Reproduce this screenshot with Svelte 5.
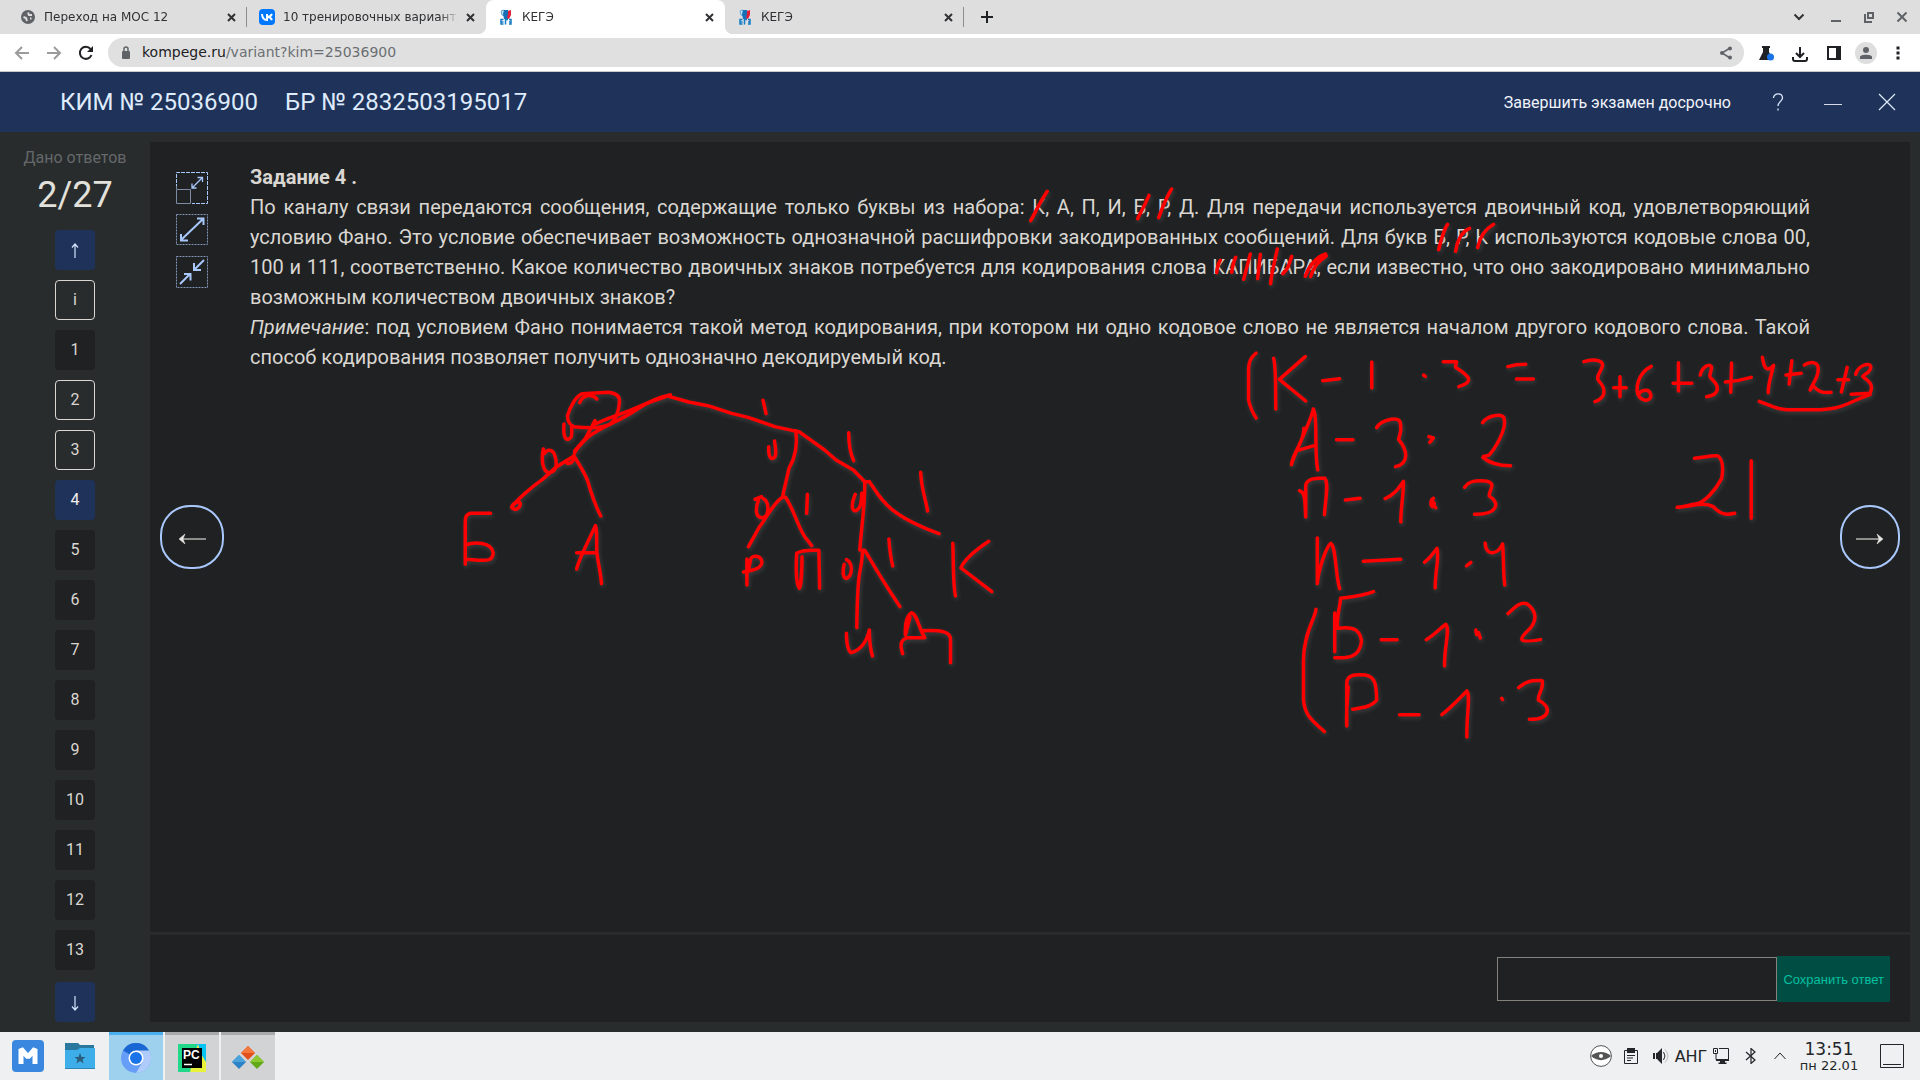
<script>
  const tabs = [
    { title: 'Переход на МОС 12', icon: 'globe' },
    { title: '10 тренировочных вариантов', icon: 'vk' },
    { title: 'КЕГЭ', icon: 'ege', active: true },
    { title: 'КЕГЭ', icon: 'ege' },
  ];
  const tasks = [
    { id: 'i', done: true },
    { id: '1' },
    { id: '2', done: true },
    { id: '3', done: true },
    { id: '4', current: true },
    ...Array.from({ length: 9 }, (_, n) => ({ id: String(n + 5) })),
  ];

  const tree = [
    'M602 75 C565 82 535 102 512 120 C475 150 420 172 388 200 C370 220 356 235 351 250',
    'M602 75 L545 98 L495 122 L440 145 L405 162 M405 152 L380 205 L352 243',
    'M333 138 C340 110 355 78 372 71 L440 67 C462 70 470 80 469 95 C468 120 460 150 445 162 C425 175 390 175 350 170 C338 165 333 150 333 138',
    'M365 98 C372 76 395 68 410 87',
    'M324 162 C322 190 325 210 335 208 C347 204 344 190 344 170',
    'M270 237 C264 270 268 305 285 308 C305 308 308 280 298 250 C290 235 278 240 273 250',
    'M350 258 L305 290 L268 328 C240 350 200 390 187 412 C195 425 210 415 210 400 C205 390 190 400 187 412',
    'M332 280 C345 283 350 270 350 258 C365 285 378 310 385 330 C395 370 405 405 420 438',
    'M132 430 H80 C66 434 66 445 66 460 V583 M66 525 C90 515 135 515 139 548 C138 577 120 572 70 568',
    'M357 597 C365 560 390 510 406 467 C412 480 408 520 410 550 C415 590 420 610 422 641 M357 548 H408',
    'M600 80 L650 96 L700 107 L762 130 L805 142 L875 170 L935 185',
    'M844 91 L852 131 M859 230 C858 255 862 267 870 265 C880 262 878 240 874 213',
    'M930 182 C935 230 925 270 912 295 L896 375 M938 185 L1005 240 L1035 270 L1080 300 L1110 335 H1122',
    'M1068 188 C1068 230 1072 250 1081 272',
    'M823 388 L840 380 M832 390 C820 430 830 445 845 443 C862 435 860 395 845 386',
    'M893 383 C870 400 850 450 835 470 L806 530 M896 382 H903 C930 430 940 490 960 510 L971 527 M960 373 L958 430',
    'M802 567 V645 M793 606 C820 600 842 595 841 575 C838 555 815 555 812 567 L806 600',
    'M946 560 C946 610 942 650 939 655 C930 640 930 590 932 550 C945 540 970 540 990 541 L992 655',
    'M1110 335 C1110 420 1100 480 1097 540 M1085 373 C1070 415 1080 425 1088 422 C1100 415 1102 390 1102 370',
    'M1122 335 C1150 380 1160 430 1304 491 M1256 307 C1258 360 1270 390 1274 423',
    'M1340 520 C1342 580 1340 640 1347 678 M1434 514 C1400 540 1370 570 1361 594 L1442 665',
    'M1104 541 C1104 580 1096 600 1094 630 C1090 680 1090 720 1089 773 M1104 541 H1110 C1135 590 1160 640 1202 710',
    'M1173 507 C1175 545 1178 565 1183 588 M1056 583 C1050 610 1055 628 1063 625 C1078 615 1080 580 1062 569',
    'M1062 790 C1062 830 1070 848 1075 848 C1100 840 1115 815 1122 780 C1122 820 1125 840 1130 858',
    'M1228 742 L1216 795 C1215 760 1222 735 1232 728 C1248 735 1250 775 1267 803 H1222 C1200 810 1203 830 1209 851 M1262 782 C1310 780 1335 785 1334 810 V878',
  ];
  const sums = [
    'M81 39 C62 60 64 80 64 110 V180 C68 205 74 220 81 234',
    'M120 55 C126 80 124 150 125 207 M191 50 L133 118 L192 183 M230 122 L268 116 M340 66 V144',
    'M456 105 L460 109 M500 65 H530 C528 80 525 80 530 84 C560 110 570 125 535 140',
    'M645 80 C660 74 670 73 685 73 M664 117 H702',
    'M815 65 C835 55 857 60 857 75 C857 90 840 110 848 122 C868 150 862 175 840 185',
    'M896 110 V170 M882 143 H910 M966 79 C935 100 928 150 940 172 C955 190 970 175 964 160 C960 145 940 150 938 165',
    'M1027 68 V153 M1015 130 H1057 M1076 105 C1080 80 1095 70 1101 80 C1103 95 1092 105 1100 115 C1122 140 1118 165 1090 170',
    'M1146 69 L1144 157 M1132 126 C1155 124 1170 120 1190 112',
    'M1215 52 C1218 80 1224 100 1240 76 C1236 100 1228 130 1228 158 M1281 62 L1275 132 M1268 105 L1302 100',
    'M1309 75 C1325 62 1342 66 1340 90 C1340 115 1325 135 1322 150 L1328 137 C1340 155 1350 160 1369 157',
    'M1405 82 L1392 156 M1384 119 H1408 M1424 103 C1430 75 1455 66 1458 80 C1458 100 1440 102 1440 110 C1455 125 1465 135 1456 160 L1414 163',
    'M1208 184 C1240 200 1245 208 1270 209 H1345 C1400 205 1400 190 1456 164',
    'M188 265 C188 310 165 330 160 374 C170 330 205 240 209 207 C220 230 210 330 219 390 M172 332 L213 316 M261 299 H298',
    'M351 263 C360 240 403 225 404 250 C408 275 402 285 400 298 C420 330 425 370 393 380',
    'M468 290 L478 294 L470 307',
    'M588 248 C600 225 630 220 636 233 C645 270 610 335 603 345 C595 350 590 345 589 352 C600 365 620 377 651 377',
    'M178 452 C192 455 190 490 192 531 V440 C192 415 215 413 235 415 C244 430 236 480 234 524 M281 480 L314 475',
    'M370 476 C390 465 400 445 411 424 C411 470 405 500 405 546 M478 475 C470 482 472 498 476 500 C482 494 482 490 474 482 M474 490 L483 503',
    'M548 442 C560 420 575 422 595 423 C622 430 602 450 603 468 C630 490 620 525 570 523',
    'M218 594 V731 C220 690 238 620 248 610 C260 620 258 700 268 746 M321 664 L405 658',
    'M458 667 C475 650 480 635 486 625 C492 650 482 690 482 744 M562 667 L552 678',
    'M594 609 C596 655 625 640 633 612 C636 660 634 700 638 735',
    'M257 819 V935 M263 860 C262 820 270 795 270 775 C300 770 320 768 344 755 M263 865 C300 858 315 870 317 905 C312 950 290 956 257 953',
    'M215 808 C215 830 187 880 187 960 V1080 C190 1130 210 1145 234 1175',
    'M361 899 H397 M462 899 C485 880 498 858 506 853 C516 870 502 920 503 978 M573 870 L575 884 L579 878 L583 894',
    'M645 821 C665 795 675 785 688 792 C710 815 710 840 695 865 C668 900 665 910 718 899',
    'M287 1040 C286 1080 282 1120 284 1158 V1030 C284 1003 305 1003 325 1005 C350 1010 350 1040 351 1080 C340 1100 320 1103 297 1108',
    'M402 1124 H446 M497 1124 C520 1100 540 1070 553 1053 C562 1070 552 1120 553 1191 M631 1075 L633 1079',
    'M669 1043 C690 1020 700 1022 722 1022 C725 1050 712 1060 713 1080 C745 1100 740 1140 693 1138',
    'M1063 355 C1085 352 1105 345 1116 348 C1127 360 1127 390 1124 415 C1110 450 1085 490 1065 492 C1050 494 1045 500 1024 502 C1060 498 1085 485 1105 500 C1120 520 1130 527 1153 520 M1190 362 V535',
  ];
  const strikes = [
    'M152 152 C165 130 180 95 202 64 M473 146 C485 120 495 105 507 76 M536 143 C548 110 560 80 575 57',
    'M1376 239 C1385 205 1390 180 1403 163 M1427 244 C1430 215 1445 185 1469 175 M1493 233 C1500 200 1520 175 1541 163',
    'M710 308 C712 290 715 280 721 271 M755 307 C758 290 760 275 767 262 M791 328 L811 252 M833 326 L841 253 M872 341 C874 310 885 270 892 237',
    'M908 311 C925 300 928 280 935 259 M976 319 C985 290 1010 260 1037 252 M992 320 C1000 290 1020 270 1039 258',
  ];
</script>

<div class="desktop">
  <div class="tabstrip">
    {#each tabs as tab}
      <div class="tab" class:active={tab.active}>
        <svg class="fav" viewBox="0 0 16 16" aria-hidden="true">
          {#if tab.icon === 'globe'}
            <circle cx="8" cy="8" r="7" fill="#5f6368" />
            <path d="M3.500 8l2.500 1 1 3M8 3.500l1 2.500h3M10 9.500h1.500" fill="none" stroke="#dedede" stroke-width="2" />
          {:else if tab.icon === 'vk'}
            <rect width="16" height="16" rx="4" fill="#07f" />
            <path d="M3 5c.2 3.600 2 6 5 6V5m5 0C12 7 10.500 8 8.500 8c2.500 0 3.800 1.500 4.500 3" fill="none" stroke="#fff" stroke-width="2" />
          {:else}
            <path d="M3 2l3-1 1 2v4l-3-1z" fill="#c5e3f5" stroke="#5aa5d5" />
            <path d="M6 1h4l1 3-1 6H6L5 5z" fill="#1670b8" />
            <path d="M10 2l3-1v5l-2 4-2-1 1-4z" fill="#e2203a" />
            <path d="M5.500 10.500H3v4.500h2.500M3 13h2.500M7.500 15.500v-5h2.500M11 10.500h2v4.500h-2M13 13h-2" fill="none" stroke="#147cc4" stroke-width="1.500" />
          {/if}
        </svg>
        <span class="title">{tab.title}</span>
        <button class="bare" aria-label="Закрыть вкладку">
          <svg width="9" height="9" viewBox="0 0 9 9"><path d="M1 1l7 7M8 1l-7 7" stroke="#303134" stroke-width="2" /></svg>
        </button>
      </div>
    {/each}
    <button class="bare plus" aria-label="Новая вкладка">
      <svg width="12" height="12" viewBox="0 0 12 12"><path d="M6 0v12M0 6h12" stroke="#202124" stroke-width="2" /></svg>
    </button>
    <div class="winctl">
      <button class="bare search" aria-label="Поиск вкладок"><svg width="12" height="12" viewBox="0 0 12 12"><path d="M1.500 3.500L6 8l4.500-4.500" fill="none" stroke="#303134" stroke-width="2" /></svg></button>
      <button class="bare" aria-label="Свернуть"><svg width="12" height="12" viewBox="0 0 12 12"><path d="M1 10h10" stroke="#5f6368" stroke-width="2" /></svg></button>
      <button class="bare" aria-label="Восстановить"><svg width="12" height="12" viewBox="0 0 12 12"><path d="M5 2h5v5H5zM2 3v8h7" fill="none" stroke="#5f6368" stroke-width="2" /></svg></button>
      <button class="bare" aria-label="Закрыть"><svg width="12" height="12" viewBox="0 0 12 12"><path d="M1.500 1.500l9 9M10.500 1.500l-9 9" stroke="#5f6368" stroke-width="2" /></svg></button>
    </div>
  </div>

  <div class="toolbar">
    <div class="history">
      <button class="bare" aria-label="Назад"><svg width="16" height="16" viewBox="0 0 16 16"><path d="M15 8H2M8 2L2 8l6 6" fill="none" stroke="#9b9b9b" stroke-width="2" /></svg></button>
      <button class="bare" aria-label="Вперёд"><svg width="16" height="16" viewBox="0 0 16 16"><path d="M1 8h13M8 2l6 6-6 6" fill="none" stroke="#9b9b9b" stroke-width="2" /></svg></button>
      <button class="bare" aria-label="Обновить"><svg width="16" height="16" viewBox="0 0 16 16"><path d="M13.500 10A6 6 0 1 1 12.500 4" fill="none" stroke="#202124" stroke-width="2" /><path d="M15 1v6H9z" fill="#202124" /></svg></button>
    </div>
    <div class="omnibox">
      <svg width="10" height="14" viewBox="0 0 10 14" aria-hidden="true"><rect x="1" y="5" width="8" height="8" rx="1" fill="#5f6368" /><path d="M3 5V3a2 2 0 0 1 4 0v2" fill="none" stroke="#5f6368" stroke-width="1.500" /></svg>
      <span class="url"><b>kompege.ru</b>/variant?kim=25036900</span>
      <svg width="14" height="14" viewBox="0 0 14 14" aria-hidden="true"><path d="M11 2L3 7l8 5" fill="none" stroke="#5f6368" stroke-width="1.500" /><circle cx="11" cy="2.500" r="2" fill="#5f6368" /><circle cx="3" cy="7" r="2" fill="#5f6368" /><circle cx="11" cy="11.500" r="2" fill="#5f6368" /></svg>
    </div>
    <div class="exts">
      <button class="bare" aria-label="Эксперименты"><svg width="16" height="16" viewBox="0 0 16 16"><path d="M4 1h8v2h-1v4l4 8H1l4-8V3H4z" fill="#202124" /><circle cx="12.500" cy="12" r="3.500" fill="#1a73e8" /></svg></button>
      <button class="bare" aria-label="Загрузки"><svg width="16" height="18" viewBox="0 0 16 18"><path d="M8 3v9M4 9l4 4 4-4M1 13v2q0 2 2 2h10q2 0 2-2v-2" fill="none" stroke="#202124" stroke-width="2" /></svg></button>
      <button class="bare" aria-label="Боковая панель"><svg width="16" height="16" viewBox="0 0 16 16"><path d="M2 2h12v12H2z" fill="none" stroke="#202124" stroke-width="2" /><path d="M10 2h4v12h-4z" fill="#202124" /></svg></button>
      <button class="bare" aria-label="Профиль"><svg width="22" height="22" viewBox="0 0 22 22"><circle cx="11" cy="11" r="11" fill="#dedede" /><circle cx="11" cy="8" r="3" fill="#5f6368" /><path d="M5 17v-2c0-3 12-3 12 0v2z" fill="#5f6368" /></svg></button>
      <button class="bare" aria-label="Меню"><svg width="4" height="14" viewBox="0 0 4 14"><path d="M.5.500h3v3h-3zM.5 5.500h3v3h-3zM.5 10.500h3v3h-3z" fill="#202124" /></svg></button>
    </div>
  </div>

  <header>
    <span>КИМ № 25036900</span>
    <span class="form">БР № 2832503195017</span>
    <button class="bare finish">Завершить экзамен досрочно</button>
    <button class="bare help" aria-label="Справка"><svg width="12" height="18" viewBox="0 0 12 18"><path d="M1.500 5C1.500-.5 10.500-.5 10.500 5c0 3-4.500 4-4.500 8M6 15.500v2" fill="none" stroke="#dce9fb" stroke-width="1.300" /></svg></button>
    <button class="bare" aria-label="Свернуть экзамен"><svg width="18" height="18" viewBox="0 0 18 18"><path d="M0 11.500h18" stroke="#d5dce5" /></svg></button>
    <button class="bare" aria-label="Закрыть экзамен"><svg width="18" height="18" viewBox="0 0 18 18"><path d="M1 1l16 16M17 1L1 17" stroke="#dce9fb" stroke-width="1.200" /></svg></button>
  </header>

  <div class="page">
    <nav>
      <p class="given">Дано ответов</p>
      <p class="count">2/27</p>
      <div class="list">
        <button class="num current arrow" aria-label="Вверх"><svg width="8" height="16" viewBox="0 0 8 16"><path d="M4 15V1M1 4.500L4 1l3 3.500" fill="none" stroke="#d3e3fd" stroke-width="1.200" /></svg></button>
        {#each tasks as t}
          <button class="num" class:done={t.done} class:current={t.current}>{t.id}</button>
        {/each}
      </div>
      <button class="num current arrow down" aria-label="Вниз"><svg width="8" height="16" viewBox="0 0 8 16"><path d="M4 1v14M1 11.500L4 15l3-3.500" fill="none" stroke="#d3e3fd" stroke-width="1.200" /></svg></button>
    </nav>

    <main>
      <section class="question">
        <div class="rail">
          <div class="sizes">
            <button class="bare" aria-label="Обычный размер"><svg width="32" height="32" viewBox="0 0 32 32" fill="none" stroke="#a8c7fa"><path d="M.5 16V.5h31v31H16" stroke-dasharray="4 1" /><path d="M.5 17.500h14v14H.5zM.5 17v-3" stroke="#7d8aa3" /><path d="M16 16L26 6M16 11.500V16h4.500M21.500 5.500H26.500V10" stroke-width="1.300" /></svg></button>
            <button class="bare" aria-label="Увеличить"><svg width="32" height="32" viewBox="0 0 32 32" fill="none" stroke="#a8c7fa"><path d="M.5.500h31v30H.5z" stroke-dasharray="2 1" stroke="#8397b8" /><path d="M5 26L27 5M5 20v6.500h7M21 4.500h6.500V11" stroke-width="2" /></svg></button>
            <button class="bare" aria-label="Уменьшить"><svg width="32" height="32" viewBox="0 0 32 32" fill="none" stroke="#a8c7fa"><path d="M.5.500h31v31H.5z" stroke-dasharray="2 1" stroke="#8397b8" /><path d="M28 4L18 14M18 7v7h7M4 28l10-10M8 18h6.500v6.500" stroke-width="2" /></svg></button>
          </div>
          <button class="round" aria-label="Предыдущее задание"><svg width="28" height="12" viewBox="0 0 28 12"><path d="M2 6h26" stroke="#d8d4cf" stroke-width="1.200" /><path d="M7 1L1 6l6 5-2-5z" fill="#e8e6e3" stroke="#e8e6e3" stroke-width=".5" /></svg></button>
        </div>
        <article>
          <h1>Задание 4 .</h1>
          <p>По каналу связи передаются сообщения, содержащие только буквы из набора: К, А, П, И, Б, Р, Д. Для передачи используется двоичный код, удовлетворяющий условию Фано. Это условие обеспечивает возможность однозначной расшифровки закодированных сообщений. Для букв Б, Р, К используются кодовые слова 00, 100 и 111, соответственно. Какое количество двоичных знаков потребуется для кодирования слова КАПИБАРА, если известно, что оно закодировано минимально возможным количеством двоичных знаков?</p>
          <p><em>Примечание</em>: под условием Фано понимается такой метод кодирования, при котором ни одно кодовое слово не является началом другого кодового слова. Такой способ кодирования позволяет получить однозначно декодируемый код.</p>
        </article>
        <div class="rail right">
          <button class="round narrow" aria-label="Следующее задание"><svg width="28" height="12" viewBox="0 0 28 12"><path d="M0 6h26" stroke="#d8d4cf" stroke-width="1.200" /><path d="M21 1l6 5-6 5 2-5z" fill="#e8e6e3" stroke="#e8e6e3" stroke-width=".5" /></svg></button>
        </div>
      </section>
      <form class="answer" onsubmit={(e) => e.preventDefault()}>
        <input type="text" aria-label="Ответ" />
        <button>Сохранить ответ</button>
      </form>
    </main>
  </div>

  <footer>
    <button class="app" aria-label="Меню приложений"><svg width="32" height="32" viewBox="0 0 32 32"><rect width="32" height="32" rx="4" fill="#3a87e0" /><path d="M9 24V9l7 8 7-8v15" fill="none" stroke="#fff" stroke-width="5" stroke-linejoin="bevel" /></svg></button>
    <button class="app files" aria-label="Файлы"><svg width="30" height="26" viewBox="0 0 30 26"><path d="M0 0h13l2 2h14v8H0z" fill="#2b789f" /><path d="M0 7h12l3-2h15v21H0z" fill="#3daee9" /><path d="M0 25h30v1H0z" fill="#2f86b5" /><path d="M15 10l1.500 4h4l-3 2.500 1 4-3.500-2.500-3.500 2.500 1-4-3-2.500h4z" fill="#2a5d7c" /></svg></button>
    <div class="running">
      <button class="task on" aria-label="Chromium"><svg width="30" height="30" viewBox="0 0 30 30"><circle cx="15" cy="15" r="15" fill="#669df6" /><path d="M15 15L2 7.500A15 15 0 0 1 28 7.500z" fill="#1967d2" /><path d="M15 7.500h13A15 15 0 0 1 15 30l6.500-11z" fill="#aecbfa" /><circle cx="15" cy="15" r="7.500" fill="#fff" /><circle cx="15" cy="15" r="6" fill="#1a73e8" /></svg></button>
      <button class="task" aria-label="PyCharm"><svg width="28" height="28" viewBox="0 0 28 28"><path d="M0 0h28v28H0z" fill="#21d789" /><path d="M18 0h10v18l-8-4z" fill="#07c3f2" /><path d="M20 0l3 10 5 8v10H12l4-18z" fill="#e8f23a" /><path d="M22 0h6v18z" fill="#07c3f2" /><path d="M4 4h20v20H4z" fill="#000" /><text x="5" y="15" class="pc">PC</text><path d="M6 20.500h8" stroke="#fff" stroke-width="1.500" /></svg></button>
      <button class="task" aria-label="Офис"><svg width="32" height="24" viewBox="0 0 32 24"><path d="M16 0l7 7-7 7-7-7z" fill="#e2501c" /><path d="M16 0l7 7H9z" fill="#f4773c" /><path d="M7 9l7 7-7 7-7-7z" fill="#2c82c6" /><path d="M7 9l7 7H0z" fill="#4ba3dc" /><path d="M25 9l7 7-7 7-7-7z" fill="#62a91a" /><path d="M25 9l7 7H18z" fill="#8cc82f" /></svg></button>
    </div>
    <div class="tray">
      <button class="item" aria-label="Просмотр"><svg width="22" height="22" viewBox="0 0 22 22"><circle cx="11" cy="11" r="10.400" fill="#fff" stroke="#555" /><path d="M1 11C7 5.500 15 5.500 21 11 15 16.500 7 16.500 1 11z" fill="#555" /><circle cx="11" cy="11" r="2" fill="#fff" /></svg></button>
      <button class="item" aria-label="Буфер обмена"><svg width="14" height="16" viewBox="0 0 14 16"><path d="M.5 2.500h13v13H.5z" fill="none" stroke="#232629" /><path d="M3 0h8v5H3zM3 7h8v1H3zM3 9.500h6v1H3zM3 12h4v1H3z" fill="#232629" /></svg></button>
      <button class="item" aria-label="Громкость"><svg width="16" height="16" viewBox="0 0 16 16"><path d="M0 5h2v6H0zM3 5h1l5-5v16l-5-5H3z" fill="#232629" /><path d="M10.500 4q3 4 0 8" fill="none" stroke="#232629" /><path d="M12 1.500q6 6.500 0 13" fill="none" stroke="#bbb" /></svg></button>
      <button class="item lang">АНГ</button>
      <button class="item" aria-label="Сеть"><svg width="16" height="16" viewBox="0 0 16 16"><path d="M.5.500h4v5h-4zM6 .5h9.500v11H3V6" fill="none" stroke="#232629" /><path d="M2 2h1v2H2zM3 11h13v2H3zM7 13h5v1.500h1.500V16h-8v-1.500H7z" fill="#232629" /></svg></button>
      <button class="item" aria-label="Bluetooth"><svg width="12" height="16" viewBox="0 0 12 16"><path d="M1 4l9 8-4 3.500V.5L10 4l-9 8" fill="none" stroke="#232629" stroke-width="1.200" /></svg></button>
      <button class="item more" aria-label="Скрытые значки"><svg width="12" height="8" viewBox="0 0 12 8"><path d="M.5 7L6 1l5.500 6" fill="none" stroke="#232629" /></svg></button>
      <div class="clock"><span class="time">13:51</span><span>пн 22.01</span></div>
      <button class="item desk" aria-label="Показать рабочий стол"><svg width="24" height="24" viewBox="0 0 24 24"><path d="M.5.500h23v23H.5zM3 20.500h18" fill="none" stroke="#232629" /></svg></button>
    </div>
  </footer>

  <svg class="ink" width="1920" height="1032" viewBox="0 0 1920 1032" stroke-width="3.500" aria-hidden="true">
    <g transform="translate(440 370) scale(.3827 .3333)">
      {#each tree as d}<path {d} />{/each}
    </g>
    <g transform="translate(1220 340) scale(.4464 .3333)">
      {#each sums as d}<path {d} />{/each}
    </g>
    <g transform="translate(980 170) scale(.3333)">
      {#each strikes as d}<path {d} />{/each}
    </g>
  </svg>
</div>

<style>
  :global(body) { margin: 0; }
  .desktop {
    position: relative;
    display: flex;
    flex-direction: column;
    min-height: 100vh;
    overflow: hidden;
    background: #292c2d;
    font-family: "DejaVu Sans", sans-serif;
  }
  svg { display: block; flex: none; }
  button, input { font: inherit; margin: 0; box-sizing: border-box; }
  .bare { display: flex; align-items: center; justify-content: center; padding: 0; border: 0; background: none; color: inherit; }

  .tabstrip { display: flex; align-items: center; height: 34px; padding: 0 8px; background: #dedede; font-size: 12px; color: #303134; }
  .tab { position: relative; display: flex; align-items: center; gap: 8px; width: 239px; height: 34px; padding: 0 11px 0 12px; box-sizing: border-box; }
  .tab:first-child, .tab:nth-child(4) { background: linear-gradient(#8e8e8e, #8e8e8e) right center / 1px 20px no-repeat; }
  .tab.active { background: #fff; border-radius: 8px 8px 0 0; }
  .tab.active::before, .tab.active::after { content: ""; position: absolute; bottom: 0; width: 8px; height: 8px; }
  .tab.active::before { left: -8px; background: radial-gradient(circle at 0 0, #dedede 8px, #fff 8px); }
  .tab.active::after { right: -8px; background: radial-gradient(circle at 100% 0, #dedede 8px, #fff 8px); }
  .fav { width: 16px; height: 16px; }
  .title { flex: 1; overflow: hidden; white-space: nowrap; -webkit-mask-image: linear-gradient(90deg, #000 90%, transparent); mask-image: linear-gradient(90deg, #000 90%, transparent); }
  .plus { margin-left: 17px; }
  .winctl { display: flex; gap: 21px; margin-left: auto; padding-right: 4px; }
  .search { margin-right: 4px; }

  .toolbar { display: flex; align-items: center; height: 38px; box-sizing: border-box; background: #fff; border-bottom: 1px solid #c8c8c8; padding: 0 20px 0 14px; }
  .history { display: flex; gap: 16px; width: 94px; }
  .omnibox { flex: 1; display: flex; align-items: center; gap: 11px; height: 29px; padding: 0 11px 0 13px; margin-right: 14px; border-radius: 15px; box-sizing: border-box; background: #e0e0e0; font-size: 14px; }
  .url { flex: 1; padding-bottom: 2px; color: #6b6f73; }
  .url b { font-weight: 400; color: #202124; }
  .exts { display: flex; align-items: center; gap: 18px; }
  .exts button:nth-child(4) { margin: 0 -3px 0 -5px; }
  .exts button:last-child { margin-left: 4px; }

  header { display: flex; align-items: center; gap: 30px; height: 60px; padding: 0 21px 0 60px; background: #1f325a; color: #deebfa; font-family: Roboto, sans-serif; font-size: 24px; }
  .form { margin-left: -3px; }
  .finish { margin: 0 8px 0 auto; font-size: 16px; color: #f0f4fa; }
  .help { margin-right: 4px; }
  header svg { margin: 0 3px; }

  .page { flex: 1; display: flex; font-family: Roboto, sans-serif; color: #dad7d2; }
  nav { display: flex; flex-direction: column; align-items: center; width: 150px; padding: 14px 0 10px; box-sizing: border-box; }
  nav p { margin: 0; }
  .given { font-size: 16px; line-height: 24px; color: #64686a; }
  .count { font-size: 36px; line-height: 50px; color: #e3e1dc; }
  .list { display: flex; flex-direction: column; gap: 10px; margin-top: 10px; }
  .num { display: flex; align-items: center; justify-content: center; width: 40px; height: 40px; padding: 0 0 2px; border: 0; border-radius: 4px; background: #1f2122; color: #dad7d2; font-size: 16px; }
  .num.done { background: none; border: 1px solid #dad7d2; }
  .num.current { background: #1f325a; color: #f2f0ec; }
  .num.arrow { padding: 2px 0 0; }
  .down { margin-top: 12px; }

  main { flex: 1; display: flex; flex-direction: column; gap: 3px; min-width: 0; padding: 10px 10px 10px 0; }
  .question { flex: 1; display: flex; background: #1f2122; }
  .rail { display: flex; flex-direction: column; width: 100px; box-sizing: border-box; padding: 30px 0 0 10px; }
  .sizes { display: flex; flex-direction: column; gap: 10px; margin-left: 16px; align-items: flex-start; }
  .round { display: flex; align-items: center; justify-content: center; width: 64px; height: 64px; margin-top: 217px; padding: 3px 0 0; border: 2px solid #a8c7fa; border-radius: 30px; background: none; }
  .narrow { width: 60px; margin-top: 0; }
  .right { padding: 363px 10px 0 0; align-items: flex-end; }
  article { flex: 1; padding-top: 20px; font-size: 20px; line-height: 30px; text-align: justify; }
  h1, article p { margin: 0; font-size: inherit; }
  .answer { display: flex; justify-content: flex-end; align-items: center; height: 87px; padding-right: 20px; background: #1f2122; }
  .answer input { width: 280px; height: 44px; padding: 0 10px; border: 1px solid #85827d; background: none; color: #dad7d2; }
  .answer button { height: 46px; padding: 2px 6px 0; border: 0; background: #004d44; color: #00c0a0; font-family: "Liberation Sans", sans-serif; font-size: 13px; }

  footer { display: flex; align-items: center; height: 48px; background: #eff0f1; color: #232629; }
  footer button { padding: 0; border: 0; background: none; color: inherit; display: flex; align-items: center; justify-content: center; }
  .app { width: 56px; height: 48px; }
  .files { width: 48px; }
  .running { display: flex; gap: 2px; margin-left: 5px; }
  footer .task { width: 54px; height: 48px; border-top: 3px solid #a9aaab; background: #d2d3d4; }
  footer .on { border-color: #49afee; background: #9dd1ed; }
  .pc { font: bold 12px "Liberation Sans", sans-serif; fill: #fff; }
  .tray { display: flex; align-items: center; margin-left: auto; }
  .item { width: 30px; height: 48px; }
  .lang { font-size: 16px; }
  .more { width: 28px; }
  .clock { display: flex; flex-direction: column; align-items: center; width: 70px; font-size: 13px; line-height: 15px; }
  .time { font-size: 17px; line-height: 18px; }
  footer .desk { width: 56px; }

  .ink { position: absolute; top: 0; left: 0; pointer-events: none; fill: none; stroke: #f00; filter: drop-shadow(1px 2px 2px rgba(110, 110, 110, 0.4)); }
  .ink path { stroke-linecap: round; stroke-linejoin: round; vector-effect: non-scaling-stroke; }
</style>
